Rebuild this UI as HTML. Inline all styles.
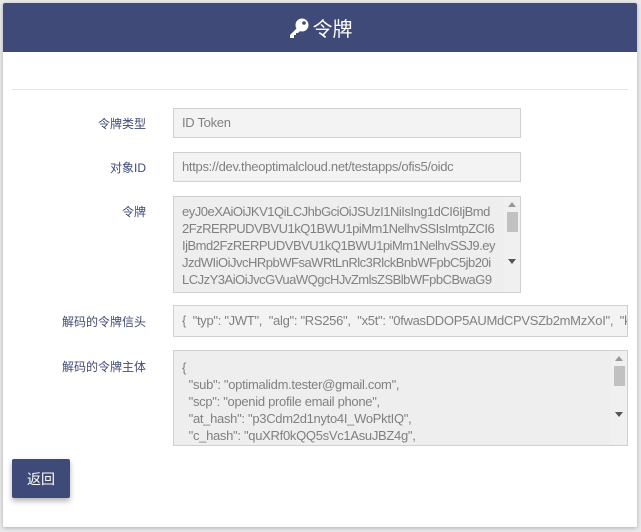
<!DOCTYPE html>
<html><head><meta charset="utf-8"><style>
body{margin:0;background:#e9e9ec;width:641px;height:532px;overflow:hidden;font-family:"Liberation Sans","Noto Sans CJK SC",sans-serif}
.card{position:absolute;left:3px;top:3px;width:634px;height:524px;background:#fff;box-shadow:0 1px 4px rgba(0,0,0,.25);border-radius:2px}
.hdr{height:49px;background:#3f4a78;color:#fff;font-size:20px;display:flex;align-items:center;justify-content:center;border-radius:2px 2px 0 0}
.hr{position:absolute;left:9px;right:9px;top:86px;border-top:1px solid #e6e6e6}
.lbl{position:absolute;width:143px;text-align:right;font-size:12px;color:#3f4a78}
.f{position:absolute;left:170px;box-sizing:border-box;border:1px solid #d0d0d0;background:#f3f3f3;color:#808080;font-size:13px;padding:0 8px;white-space:nowrap;overflow:hidden;letter-spacing:-0.3px}
.ta{background:#eee;white-space:normal;line-height:17px;padding:6px 24px 0 8px;word-break:break-all}
.sb{position:absolute;right:0;top:0;bottom:0;width:16px;background:#f0f0f0}
.sb .th{position:absolute;left:3px;top:15px;width:11px;height:20px;background:#c1c1c1}
.sb .up{position:absolute;left:4px;top:5px;border:4px solid transparent;border-bottom:5px solid #999;border-top:0}
.sb .dn{position:absolute;left:4px;bottom:28px;border:4px solid transparent;border-top:5px solid #555;border-bottom:0}
.btn{position:absolute;left:9px;top:456px;width:58px;height:39px;background:#3f4a78;color:#fff;font-size:14px;display:flex;align-items:center;justify-content:center;border-radius:2px;box-shadow:0 3px 6px rgba(0,0,0,.3)}
</style></head><body>
<div class="card">
<div class="hdr"><svg width="22" height="22" viewBox="0 0 22 22" style="margin-right:3px"><circle cx="14" cy="8" r="6.5" fill="#fff"/><circle cx="16" cy="6" r="1.8" fill="#3f4a78"/><path d="M10 10 L2 18 L2 21 L6 21 L6 18 L8 18 L8 16 L10 16 L13 13Z" fill="#fff"/></svg>令牌</div>
<div class="hr"></div>
<div class="lbl" style="top:112px">令牌类型</div>
<div class="f" style="top:105px;width:348px;height:30px;line-height:28px">ID Token</div>
<div class="lbl" style="top:156px">对象ID</div>
<div class="f" style="top:149px;width:348px;height:30px;line-height:28px">https://dev.theoptimalcloud.net/testapps/ofis5/oidc</div>
<div class="lbl" style="top:200px">令牌</div>
<div class="f ta" style="top:193px;width:348px;height:97px;letter-spacing:-0.5px">eyJ0eXAiOiJKV1QiLCJhbGciOiJSUzI1NiIsIng1dCI6IjBmd2FzRERPUDVBVU1kQ1BWU1piMm1NelhvSSIsImtpZCI6IjBmd2FzRERPUDVBVU1kQ1BWU1piMm1NelhvSSJ9.eyJzdWIiOiJvcHRpbWFsaWRtLnRlc3RlckBnbWFpbC5jb20iLCJzY3AiOiJvcGVuaWQgcHJvZmlsZSBlbWFpbCBwaG9uZSIsImF0<div class="sb"><div class="up"></div><div class="th"></div><div class="dn"></div></div></div>
<div class="lbl" style="top:310px">解码的令牌信头</div>
<div class="f" style="top:302px;width:455px;height:32px;line-height:30px">{ &nbsp;"typ": "JWT", &nbsp;"alg": "RS256", &nbsp;"x5t": "0fwasDDOP5AUMdCPVSZb2mMzXoI", &nbsp;"kid": "0f</div>
<div class="lbl" style="top:355px">解码的令牌主体</div>
<div class="f ta" style="top:347px;width:455px;height:96px;padding-top:8px;white-space:pre">{
  "sub": "optimalidm.tester@gmail.com",
  "scp": "openid profile email phone",
  "at_hash": "p3Cdm2d1nyto4I_WoPktIQ",
  "c_hash": "quXRf0kQQ5sVc1AsuJBZ4g",
  "auth_time": 1633029133,<div class="sb"><div class="up"></div><div class="th"></div><div class="dn"></div></div></div>
<div class="btn">返回</div>
</div>
</body></html>
